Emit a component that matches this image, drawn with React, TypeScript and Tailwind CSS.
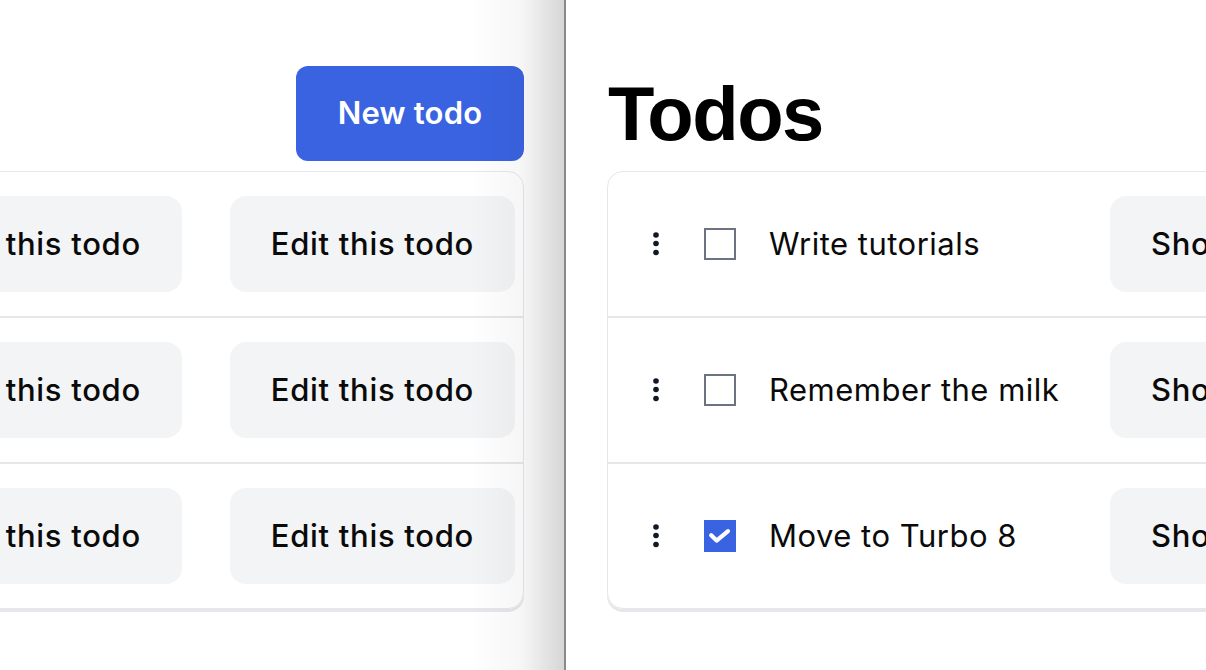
const todos = [
  { title: "Write tutorials", done: false },
  { title: "Remember the milk", done: false },
  { title: "Move to Turbo 8", done: true },
];

const DotsIcon = () => (
  <svg viewBox="0 0 16 32" className="h-8 w-4 text-[#111827]" fill="currentColor">
    <circle cx="8" cy="7" r="2.8" />
    <circle cx="8" cy="15.5" r="2.8" />
    <circle cx="8" cy="24.5" r="2.8" />
  </svg>
);

const Checkbox = ({ checked }: { checked: boolean }) =>
  checked ? (
    <div className="flex h-8 w-8 shrink-0 items-center justify-center bg-[#3a63e2]">
      <svg viewBox="0 0 16 16" className="h-8 w-8" fill="none">
        <path
          d="M3.6 7.6 6.3 10.3 12 5.6"
          stroke="white"
          strokeWidth="2.1"
          strokeLinecap="round"
          strokeLinejoin="round"
        />
      </svg>
    </div>
  ) : (
    <div className="h-8 w-8 shrink-0 border-2 border-[#6b7280] bg-white" />
  );

const GrayButton = ({ label }: { label: string }) => (
  <button className="flex h-[96px] shrink-0 items-center rounded-[16px] bg-[#f3f4f6] px-[41px] text-[31px] font-medium tracking-[0.7px] whitespace-nowrap text-[#0a0a0a]">
    {label}
  </button>
);

export default function App() {
  return (
    <div className="flex h-[670px] w-[1206px] overflow-hidden bg-white font-['Inter',sans-serif] text-[#0a0a0a]">
      {/* left window, scrolled to its right edge */}
      <div className="relative w-[564px] shrink-0 overflow-hidden">
        <div className="flex flex-col items-end pr-[40px]">
          <div className="mt-[66px] flex h-[95px] items-center">
            <button className="h-[95px] w-[228px] rounded-[12px] bg-[#3a63e2] text-[31px] font-semibold tracking-[0.2px] text-white">
              New todo
            </button>
          </div>
          <div className="mt-[10px] w-[1000px] shrink-0 rounded-[16px] border border-[#e5e7eb] shadow-[0_3px_0_#e5e7eb]">
            {todos.map((t, i) => (
              <div
                key={t.title}
                className={`flex items-center justify-end gap-[48px] py-6 pr-[8px] ${
                  i < todos.length - 1 ? "border-b-2 border-[#e5e7eb]" : ""
                }`}
              >
                <GrayButton label="Show this todo" />
                <GrayButton label="Edit this todo" />
              </div>
            ))}
          </div>
        </div>
        <div className="pointer-events-none absolute top-0 right-0 bottom-0 w-[95px] bg-linear-to-r from-transparent via-black/[0.035] via-55% to-black/[0.16]" />
      </div>

      <div className="w-[2px] shrink-0 bg-[#8a8a8a]" />

      {/* right window */}
      <div className="flex-1 overflow-hidden pl-[41px]">
        <div className="mt-[66px] flex h-[95px] items-center">
          <h1 className="pl-px font-['Liberation_Sans',Arial,sans-serif] text-[76px] leading-none font-bold tracking-[-1.5px] text-black">
            Todos
          </h1>
        </div>
        <div className="mt-[10px] w-[1000px] rounded-[16px] border border-[#e5e7eb] shadow-[0_3px_0_#e5e7eb]">
          {todos.map((t, i) => (
            <div
              key={t.title}
              className={`flex items-center py-6 pl-[40px] ${
                i < todos.length - 1 ? "border-b-2 border-[#e5e7eb]" : ""
              }`}
            >
              <DotsIcon />
              <div className="ml-[40px]">
                <Checkbox checked={t.done} />
              </div>
              <div className="ml-[33px] w-[341px] shrink-0 text-[31px] tracking-[0.5px] whitespace-nowrap">
                {t.title}
              </div>
              <GrayButton label="Show this todo" />
            </div>
          ))}
        </div>
      </div>
    </div>
  );
}
